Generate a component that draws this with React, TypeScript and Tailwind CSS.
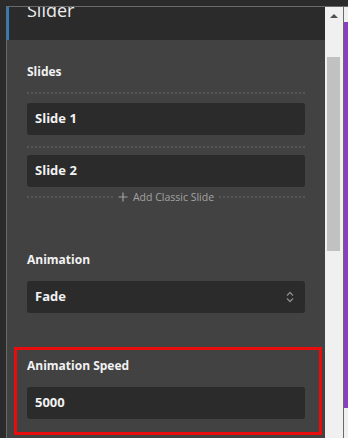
import React from 'react';

// Slider settings panel — dark editor sidebar with a scrollbar strip

const font = { fontFamily: '"Open Sans", "Noto Sans", Arial, sans-serif' };

function Divider() {
  return <div className="border-t-2 border-dotted border-[#565656]" />;
}

function Field({ children, right }: { children: React.ReactNode; right?: React.ReactNode }) {
  return (
    <div className="flex h-[32px] items-center justify-between rounded-[3px] bg-[#2b2b2b] pl-[8px] pr-[11px] text-[13px] font-bold text-[#f2f2f2]">
      <span>{children}</span>
      {right}
    </div>
  );
}

function UpDown() {
  return (
    <svg width="8" height="12" viewBox="0 0 8 12" fill="none" stroke="#8c8c8c" strokeWidth="1.3">
      <path d="M1 4.5 L4 1.5 L7 4.5" />
      <path d="M1 7.5 L4 10.5 L7 7.5" />
    </svg>
  );
}

export default function App() {
  return (
    <div className="flex h-[438px] w-[348px] overflow-hidden bg-[#2b2b2b]" style={font}>
      <div className="flex w-[344px] flex-col pl-[6px] pt-[6px]">
        <div className="flex min-h-0 flex-1 border-l border-t border-r border-[#6a6a6a]">
          {/* panel */}
          <div className="flex w-[318px] flex-col bg-[#424242]">
            <div className="flex h-[33px] overflow-hidden bg-[#2b2b2b]">
              <div className="w-[2px] bg-[#2680d0]" />
              <span className="ml-[18px] mt-[-6px] text-[18px] leading-[18px] text-[#ececec]">Slider</span>
            </div>

            <div className="flex flex-col px-[20px] pt-[24px]">
              <span className="h-[16px] text-[12px] font-bold leading-[16px] text-[#f2f2f2]">Slides</span>
              <div className="mt-[12px]">
                <Divider />
              </div>
              <div className="mt-[9px]">
                <Field>Slide 1</Field>
              </div>
              <div className="mt-[11px]">
                <Divider />
              </div>
              <div className="mt-[7px]">
                <Field>Slide 2</Field>
              </div>
              <div className="mt-[2px] flex h-[16px] items-center gap-[5px]">
                <div className="flex-1 border-t-2 border-dotted border-[#565656]" />
                <svg width="10" height="10" viewBox="0 0 10 10" stroke="#a0a0a0" strokeWidth="1.2">
                  <path d="M5 0.5 V9.5 M0.5 5 H9.5" />
                </svg>
                <span className="text-[10.5px] leading-[16px] text-[#a3a3a3]">Add Classic Slide</span>
                <div className="flex-1 border-t-2 border-dotted border-[#565656]" />
              </div>

              <span className="mt-[47px] h-[16px] text-[12px] font-bold leading-[16px] text-[#f2f2f2]">Animation</span>
              <div className="mt-[13px]">
                <Field right={<UpDown />}>Fade</Field>
              </div>

              {/* highlighted field */}
              <div className="ml-[-13px] mr-[-17px] mt-[34px] flex flex-col border-[3px] border-[#e80c0c] pb-[13px] pl-[10px] pr-[14px] pt-[8px]">
                <span className="h-[16px] text-[12px] font-bold leading-[16px] text-[#f2f2f2]">Animation Speed</span>
                <div className="mt-[13px]">
                  <Field>5000</Field>
                </div>
              </div>
            </div>
          </div>

          {/* scrollbar */}
          <div className="flex w-[18px] flex-col items-center bg-[#f0f0f0]">
            <div className="flex h-[17px] w-full items-center justify-center">
              <div className="mt-[1px] h-0 w-0 border-x-[4px] border-b-[4px] border-x-transparent border-b-[#505050]" />
            </div>
            <div className="ml-[-1px] mt-[33px] h-[194px] w-[13px] bg-[#c1c1c1]" />
          </div>
        </div>
      </div>

      {/* side strip */}
      <div className="flex w-[4px] flex-col pt-[6px]">
        <div className="flex flex-1 flex-col border-t border-[#6a6a6a] bg-[#f0f0f0]">
          <div className="mt-[15px] h-[386px] bg-[#8a3fc0]" />
        </div>
      </div>
    </div>
  );
}
